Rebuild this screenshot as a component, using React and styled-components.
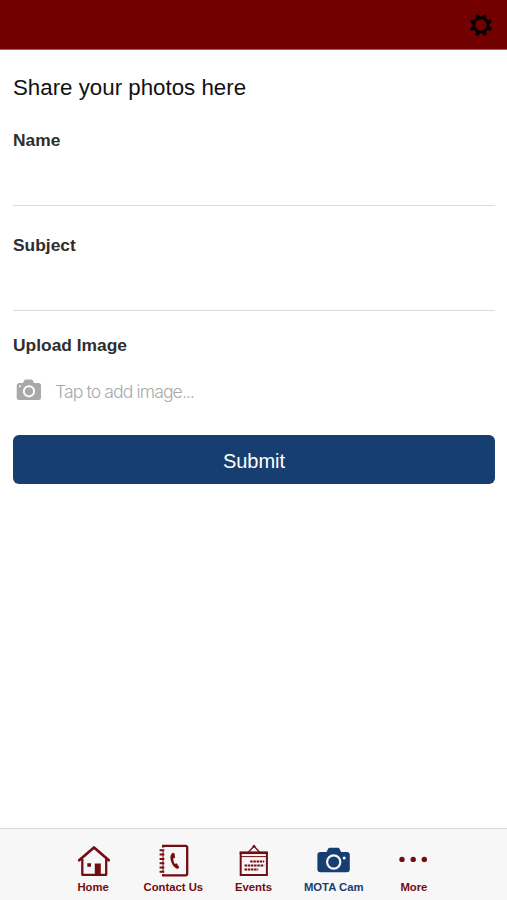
/* eslint-disable react/prop-types */
import styled, { createGlobalStyle } from "styled-components";

const GlobalStyle = createGlobalStyle`
  * {
    box-sizing: border-box;
  }

  body {
    margin: 0;
    background: #fff;
    font-family: "Liberation Sans", Arial, sans-serif;
  }
`;

const Screen = styled.div`
  display: flex;
  flex-direction: column;
  width: 100%;
  height: 100vh;
  overflow: hidden;
`;

const Header = styled.header`
  display: flex;
  justify-content: flex-end;
  align-items: center;
  flex: none;
  height: 50px;
  padding: 1px 14px 0 0;
  background: #720001;
  border-bottom: 1px solid #a96060;

  svg {
    display: block;
  }
`;

const Form = styled.form`
  flex: 1;
  padding: 24px 12px 0 13px;
`;

const Title = styled.h1`
  margin: 0;
  color: #111;
  font-size: 22.3px;
  font-weight: 400;
  line-height: 28px;
`;

const Label = styled.label`
  display: block;
  color: #2e2e2e;
  font-size: 17.4px;
  font-weight: 700;
  line-height: 20px;
`;

const Field = styled.div`
  height: ${({ $height }) => $height}px;
  margin-top: ${({ $gap }) => $gap}px;
  border-bottom: 1px solid #dcdcdc;
`;

const Input = styled.input`
  display: block;
  width: 100%;
  height: 44px;
  padding: 0;
  border: none;
  outline: none;
  background: transparent;
  font-size: 18px;
`;

const Upload = styled.div`
  margin-top: 24px;
`;

const UploadRow = styled.div`
  display: flex;
  align-items: center;
  height: 30px;
  margin-top: 20px;
  padding-left: 3px;
  color: #a9a9a9;

  span {
    margin: 3px 0 0 13px;
    font-family: Inter, "Liberation Sans", sans-serif;
    font-size: 17.6px;
    font-weight: 300;
    letter-spacing: -0.9px;
    line-height: 24px;
    white-space: nowrap;
  }
`;

const SubmitButton = styled.button`
  display: block;
  width: 100%;
  height: 49px;
  margin: 30px 0 0;
  padding: 3px 0 0;
  border: none;
  border-radius: 6px;
  background: #173e71;
  color: #fff;
  font-family: inherit;
  font-size: 20px;
`;

const TabBar = styled.nav`
  display: flex;
  justify-content: center;
  flex: none;
  height: 72px;
  padding-top: 14px;
  border-top: 1px solid #d9d9d9;
  background: #f7f7f7;
`;

const Tab = styled.div`
  display: flex;
  flex-direction: column;
  align-items: center;
  width: 80.2px;
  color: ${({ $active }) => ($active ? "#173e71" : "#720d12")};
  font-size: 11.3px;
  font-weight: 700;
  line-height: 14px;
  white-space: nowrap;

  svg {
    display: block;
    margin: 0 0 1px 1px;
  }
`;

const GearIcon = () => (
  <svg width="24" height="24" viewBox="-12 -12 24 24">
    <circle r="7.1" fill="none" stroke="#080000" strokeWidth="2.7" />
    {[0, 1, 2, 3, 4, 5, 6, 7].map((i) => (
      <path
        key={i}
        d="M-2.4 -7.5L-1.5 -11.2H1.5L2.4 -7.5Z"
        fill="#080000"
        transform={`rotate(${22.5 + i * 45})`}
      />
    ))}
  </svg>
);

const UploadIcon = () => (
  <svg width="26" height="22" viewBox="0 0 26 22">
    <path
      d="M3 4H7L8.2 1.5Q8.8 .5 10 .5H15Q16.2 .5 16.8 1.5L18 4H22.5Q25 4 25 6.5V18.5Q25 21 22.5 21H3Q.7 21 .7 18.5V6.5Q.7 4 3 4Z"
      fill="currentColor"
    />
    <circle cx="13" cy="12.3" r="5.1" fill="none" stroke="#fff" strokeWidth="2" />
    <circle cx="4.1" cy="7.2" r="1" fill="#fff" />
  </svg>
);

const HomeIcon = () => (
  <svg width="34" height="36" viewBox="0 0 34 36" fill="none" stroke="currentColor">
    <path d="M2.2 17.2L17 4.4L31.8 17.2" strokeWidth="2.7" strokeLinecap="round" strokeLinejoin="round" />
    <path d="M5.3 16V31.8H29.2V16" strokeWidth="2.3" strokeLinejoin="round" />
    <path d="M17.8 20.5H23.8V32H17.8ZM10.3 20.2H14V23.8H10.3Z" fill="currentColor" stroke="none" />
  </svg>
);

const ContactIcon = () => (
  <svg width="34" height="36" viewBox="0 0 34 36" fill="none" stroke="currentColor">
    <path d="M6.2 4.5V2.9H28.5Q30.2 2.9 30.2 4.6V30.6Q30.2 32.3 28.5 32.3H6.2V31" strokeWidth="2.3" />
    <path d="M6 7.5V29.5" strokeWidth="1" />
    <path d="M2.6 7.3H7.3M2.6 11.6H7.3M2.6 15.9H7.3M2.6 20.2H7.3M2.6 24.5H7.3M2.6 28.8H7.3" strokeWidth="2" />
    <path
      d="M15.8 9.8Q12.6 11.7 13.6 16.5Q14.8 22.8 19.4 25.6Q21.1 26.1 22.3 24.2L19.6 20.2L17.7 21.1Q16.1 18.2 16.2 15.6L18.1 14.8L17.5 10.2Z"
      fill="currentColor"
      stroke="none"
    />
  </svg>
);

const EventsIcon = () => (
  <svg width="34" height="36" viewBox="0 0 34 36" fill="none" stroke="currentColor">
    <path d="M11.5 9L17 3.3L22.5 9" strokeWidth="1.3" />
    <circle cx="17" cy="3.3" r="1.4" fill="currentColor" stroke="none" />
    <rect x="3.7" y="9.7" width="26.2" height="22.3" strokeWidth="2" />
    <path d="M2.7 9.8H30.9" strokeWidth="2.5" />
    <path d="M4 13.6H30" strokeWidth="1" />
    <g strokeWidth="2" strokeDasharray="2.5 .7">
      <path d="M13.2 18.4H27.2" />
      <path d="M7.5 22.4H27.2" />
      <path d="M7.5 26.4H21.2" />
    </g>
  </svg>
);

const CameraIcon = () => (
  <svg width="34" height="36" viewBox="0 0 34 36">
    <path
      d="M3.5 9H9.5L11 6Q11.6 4.8 12.8 4.8H20.8Q22 4.8 22.6 6L24.1 9H29.8Q32.8 9 32.8 12V26.2Q32.8 29.2 29.8 29.2H3.4Q.4 29.2 .4 26.2V12Q.4 9 3.5 9Z"
      fill="currentColor"
    />
    <circle cx="16.7" cy="19" r="6.6" fill="none" stroke="#f7f7f7" strokeWidth="2.2" />
    <circle cx="27.2" cy="15" r="1.5" fill="#f7f7f7" />
  </svg>
);

const MoreIcon = () => (
  <svg width="34" height="36" viewBox="0 0 34 36" fill="currentColor">
    <circle cx="5" cy="16.4" r="2.7" />
    <circle cx="16.2" cy="16.4" r="2.7" />
    <circle cx="27.3" cy="16.4" r="2.7" />
  </svg>
);

const tabs = [
  { name: "Home", Icon: HomeIcon },
  { name: "Contact Us", Icon: ContactIcon },
  { name: "Events", Icon: EventsIcon },
  { name: "MOTA Cam", Icon: CameraIcon, active: true },
  { name: "More", Icon: MoreIcon },
];

const App = () => {
  return (
    <Screen>
      <GlobalStyle />
      <Header>
        <GearIcon />
      </Header>
      <Form onSubmit={(e) => e.preventDefault()}>
        <Title>Share your photos here</Title>
        <Field $height={76} $gap={28}>
          <Label htmlFor="name">Name</Label>
          <Input id="name" />
        </Field>
        <Field $height={76} $gap={29}>
          <Label htmlFor="subject">Subject</Label>
          <Input id="subject" />
        </Field>
        <Upload>
          <Label as="div">Upload Image</Label>
          <UploadRow>
            <UploadIcon />
            <span>Tap to add image...</span>
          </UploadRow>
        </Upload>
        <SubmitButton type="submit">Submit</SubmitButton>
      </Form>
      <TabBar>
        {tabs.map(({ name, Icon, active }) => (
          <Tab key={name} $active={active}>
            <Icon />
            {name}
          </Tab>
        ))}
      </TabBar>
    </Screen>
  );
};

export default App;
